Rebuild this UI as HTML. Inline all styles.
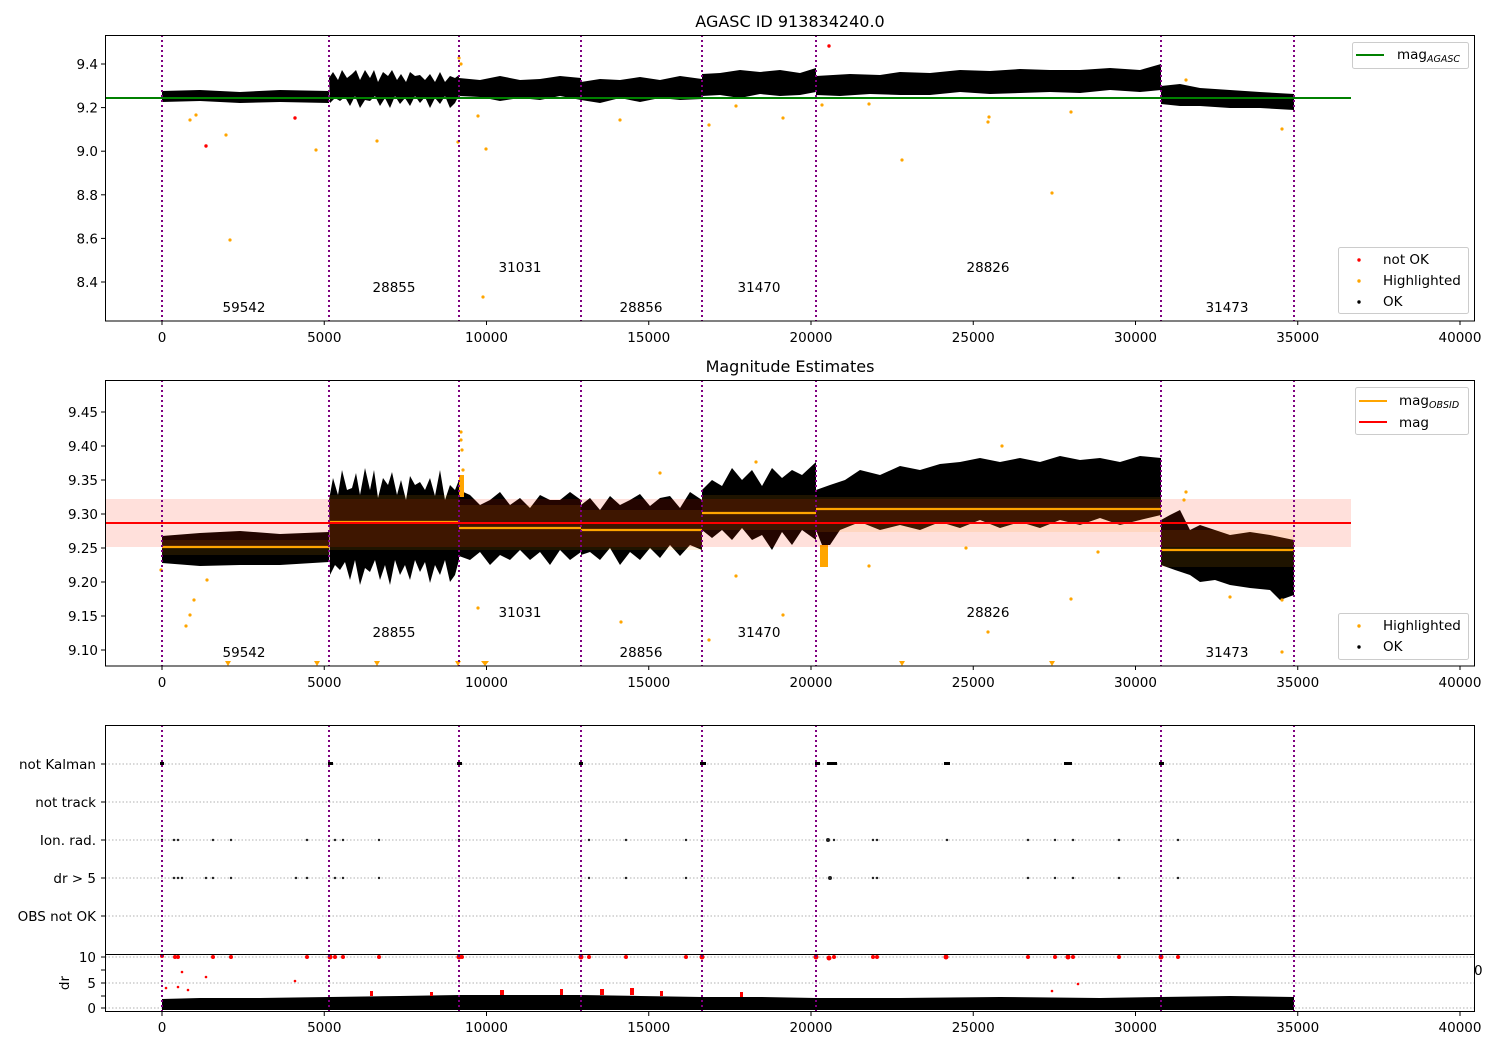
<!DOCTYPE html>
<html><head><meta charset="utf-8"><style>
html,body{margin:0;padding:0;background:#fff}
svg{display:block}
text{font-family:"DejaVu Sans","Liberation Sans",sans-serif;font-size:13.5px;fill:#000}
</style></head><body>
<svg width="1500" height="1050" viewBox="0 0 1500 1050" xmlns="http://www.w3.org/2000/svg">

<!-- ================= PLOT 1 ================= -->
<text x="790" y="27" text-anchor="middle" style="font-size:16px">AGASC ID 913834240.0</text>
<g>
<g fill="#000">
<polygon points="162,91 200,90 240,92 280,90 329,91 329,103 280,102 240,103 200,101 162,102"/>
<polygon points="329,78 333,72 338,80 342,70 347,78 352,74 356,70 360,80 365,70 370,78 374,70 378,82 383,72 388,76 392,70 397,80 401,74 406,82 410,72 415,76 420,75 425,80 430,74 435,82 440,72 445,82 450,76 455,78 459,75 459,95 455,103 450,108 445,96 440,104 435,98 430,108 425,97 420,103 415,96 410,106 405,98 400,104 395,96 390,108 385,98 380,106 375,96 370,101 365,100 360,108 355,96 350,106 345,97 340,101 335,98 330,103"/>
<polygon points="459,78 480,80 500,76 520,80 540,79 560,76 581,78 581,100 560,96 540,100 520,98 500,101 480,97 459,96"/>
<polygon points="581,82 600,79 620,80 640,77 660,80 680,76 702,79 702,99 680,100 660,98 640,102 620,98 600,103 581,100"/>
<polygon points="702,74 720,73 740,70 760,72 780,70 800,73 816,68 816,92 800,95 780,96 760,94 740,98 720,95 702,96"/>
<polygon points="816,76 850,74 880,75 900,72 930,73 960,70 990,71 1020,69 1050,70 1080,70 1110,68 1140,70 1161,64 1161,90 1140,92 1110,90 1080,93 1050,92 1020,93 990,94 960,92 930,95 900,95 870,94 840,96 816,95"/>
<polygon points="1161,86 1180,84 1200,88 1230,90 1260,92 1294,94 1294,110 1260,108 1230,108 1200,106 1180,106 1161,104"/>
</g>
<line x1="105" x2="1351" y1="98" y2="98" stroke="#008000" stroke-width="2"/>
<g fill="#ffa500">
<circle cx="230" cy="240" r="1.6"/><circle cx="226" cy="135" r="1.6"/><circle cx="196" cy="115" r="1.6"/><circle cx="190" cy="120" r="1.6"/><circle cx="316" cy="150" r="1.6"/><circle cx="377" cy="141" r="1.6"/><circle cx="459" cy="58" r="1.6"/><circle cx="461" cy="64" r="1.6"/><circle cx="478" cy="116" r="1.6"/><circle cx="486" cy="149" r="1.6"/><circle cx="483" cy="297" r="1.6"/><circle cx="458" cy="142" r="1.6"/><circle cx="620" cy="120" r="1.6"/><circle cx="709" cy="125" r="1.6"/><circle cx="736" cy="106" r="1.6"/><circle cx="783" cy="118" r="1.6"/><circle cx="822" cy="105" r="1.6"/><circle cx="869" cy="104" r="1.6"/><circle cx="902" cy="160" r="1.6"/><circle cx="989" cy="117" r="1.6"/><circle cx="988" cy="122" r="1.6"/><circle cx="1052" cy="193" r="1.6"/><circle cx="1071" cy="112" r="1.6"/><circle cx="1282" cy="129" r="1.6"/><circle cx="1186" cy="80" r="1.6"/>
</g>
<g fill="#f00"><circle cx="206" cy="146" r="1.7"/><circle cx="295" cy="118" r="1.7"/><circle cx="829" cy="46" r="1.7"/></g>
<g stroke="#800080" stroke-width="2" stroke-dasharray="2,3">
<line x1="162" x2="162" y1="35" y2="321"/><line x1="329" x2="329" y1="35" y2="321"/><line x1="459" x2="459" y1="35" y2="321"/><line x1="581" x2="581" y1="35" y2="321"/><line x1="702" x2="702" y1="35" y2="321"/><line x1="816" x2="816" y1="35" y2="321"/><line x1="1161" x2="1161" y1="35" y2="321"/><line x1="1294" x2="1294" y1="35" y2="321"/>
</g>
<rect x="105.5" y="35.5" width="1369" height="285.5" fill="none" stroke="#000" stroke-width="1"/>
<g stroke="#000"><line x1="101" x2="105" y1="64" y2="64"/><line x1="101" x2="105" y1="107.6" y2="107.6"/><line x1="101" x2="105" y1="151.2" y2="151.2"/><line x1="101" x2="105" y1="194.8" y2="194.8"/><line x1="101" x2="105" y1="238.4" y2="238.4"/><line x1="101" x2="105" y1="282" y2="282"/></g>
<g text-anchor="end"><text x="98" y="69">9.4</text><text x="98" y="112.6">9.2</text><text x="98" y="156.2">9.0</text><text x="98" y="199.8">8.8</text><text x="98" y="243.4">8.6</text><text x="98" y="287">8.4</text></g>
<g stroke="#000"><line x1="162" x2="162" y1="321" y2="325"/><line x1="324.25" x2="324.25" y1="321" y2="325"/><line x1="486.5" x2="486.5" y1="321" y2="325"/><line x1="648.75" x2="648.75" y1="321" y2="325"/><line x1="811" x2="811" y1="321" y2="325"/><line x1="973.25" x2="973.25" y1="321" y2="325"/><line x1="1135.5" x2="1135.5" y1="321" y2="325"/><line x1="1297.75" x2="1297.75" y1="321" y2="325"/><line x1="1460" x2="1460" y1="321" y2="325"/></g>
<g text-anchor="middle"><text x="162" y="342">0</text><text x="324.25" y="342">5000</text><text x="486.5" y="342">10000</text><text x="648.75" y="342">15000</text><text x="811" y="342">20000</text><text x="973.25" y="342">25000</text><text x="1135.5" y="342">30000</text><text x="1297.75" y="342">35000</text><text x="1460" y="342">40000</text></g>
<g text-anchor="middle"><text x="244" y="312">59542</text><text x="394" y="292">28855</text><text x="520" y="272">31031</text><text x="641" y="312">28856</text><text x="759" y="292">31470</text><text x="988" y="272">28826</text><text x="1227" y="312">31473</text></g>
<rect x="1352.5" y="42.5" width="116" height="26" rx="2" fill="#fff" fill-opacity="0.8" stroke="#ccc"/>
<line x1="1356" x2="1384" y1="55" y2="55" stroke="#008000" stroke-width="2"/>
<text x="1397" y="59">mag<tspan style="font-size:9.5px;font-style:italic" dy="3">AGASC</tspan></text>
<rect x="1338.5" y="247.5" width="130" height="66" rx="2" fill="#fff" fill-opacity="0.8" stroke="#ccc"/>
<circle cx="1359" cy="260" r="1.7" fill="#f00"/><text x="1383" y="264">not OK</text>
<circle cx="1359" cy="281" r="1.7" fill="#ffa500"/><text x="1383" y="285">Highlighted</text>
<circle cx="1359" cy="302" r="1.7" fill="#000"/><text x="1383" y="306">OK</text>
</g>

<!-- ================= PLOT 2 ================= -->
<text x="790" y="372" text-anchor="middle" style="font-size:16px">Magnitude Estimates</text>
<g fill="#000">
<polygon points="162,536 200,533 240,531 280,534 329,532 329,562 280,565 240,565 200,566 162,563"/>
<polygon points="329,500 333,478 338,495 342,470 347,490 352,488 356,473 360,495 365,468 370,490 374,470 378,498 383,478 388,485 392,472 397,495 401,480 406,500 410,476 415,485 420,482 425,490 430,478 435,496 440,470 445,500 450,485 455,490 459,480 459,560 455,575 450,582 445,560 440,575 435,565 430,583 425,562 420,572 415,560 410,580 405,565 400,575 395,560 390,585 385,565 380,580 375,560 370,572 365,568 360,585 355,560 350,580 345,562 340,570 335,565 330,575"/>
<polygon points="459,490 470,495 480,505 490,500 500,492 510,505 520,498 530,508 540,495 550,500 560,500 570,492 581,500 581,552 570,560 560,550 550,565 540,552 530,560 520,550 510,560 500,555 490,565 480,552 470,560 459,556"/>
<polygon points="581,505 590,498 600,510 610,496 620,505 630,500 640,494 650,506 660,498 670,496 680,508 690,492 702,500 702,550 690,545 680,556 670,545 660,558 650,548 640,560 630,552 620,565 610,548 600,560 590,552 581,555"/>
<polygon points="702,490 712,480 722,486 732,468 742,480 752,470 762,486 772,468 782,478 792,470 802,475 816,462 816,540 802,530 792,545 782,532 772,550 762,535 752,540 742,528 732,540 722,530 712,538 702,530"/>
<polygon points="816,490 830,485 845,480 860,470 880,475 900,466 920,470 940,464 960,462 980,458 1000,462 1020,458 1040,462 1060,456 1080,460 1100,458 1120,462 1140,456 1161,458 1161,515 1140,520 1120,525 1100,518 1080,525 1060,520 1040,528 1020,522 1000,528 980,520 960,528 940,522 920,530 900,525 880,530 860,522 840,530 830,545 822,545 816,530"/>
<polygon points="1161,520 1170,515 1180,510 1190,530 1200,525 1215,530 1230,535 1250,532 1270,535 1294,540 1294,595 1280,600 1270,590 1250,588 1230,585 1215,580 1200,582 1190,575 1175,570 1161,565"/>
</g>
<g fill="#ffa500">
<rect x="820" y="545" width="8" height="22"/>
<rect x="459" y="475" width="5" height="22"/>
</g>
<g fill="#ffa500" fill-opacity="0.12">
<rect x="162" y="540" width="167" height="15"/><rect x="329" y="495" width="130" height="55"/><rect x="459" y="505" width="122" height="45"/><rect x="581" y="510" width="121" height="40"/><rect x="702" y="495" width="114" height="35"/><rect x="816" y="497" width="345" height="35"/><rect x="1161" y="530" width="133" height="37"/>
</g>
<rect x="105" y="499" width="1246" height="48" fill="#ff2000" fill-opacity="0.14"/>
<g stroke="#ffa500" stroke-width="2.2">
<line x1="162" x2="329" y1="547" y2="547"/><line x1="329" x2="459" y1="522" y2="522"/><line x1="459" x2="581" y1="528" y2="528"/><line x1="581" x2="702" y1="530" y2="530"/><line x1="702" x2="816" y1="513" y2="513"/><line x1="816" x2="1161" y1="509" y2="509"/><line x1="1161" x2="1294" y1="550" y2="550"/>
</g>
<line x1="105" x2="1351" y1="523" y2="523" stroke="#f00" stroke-width="2"/>
<g fill="#ffa500">
<circle cx="190" cy="615" r="1.6"/><circle cx="186" cy="626" r="1.6"/><circle cx="194" cy="600" r="1.6"/><circle cx="207" cy="580" r="1.6"/><circle cx="161" cy="570" r="1.6"/><circle cx="461" cy="432" r="1.6"/><circle cx="461" cy="440" r="1.6"/><circle cx="462" cy="450" r="1.6"/><circle cx="463" cy="470" r="1.6"/><circle cx="478" cy="608" r="1.6"/><circle cx="621" cy="622" r="1.6"/><circle cx="660" cy="473" r="1.6"/><circle cx="709" cy="640" r="1.6"/><circle cx="736" cy="576" r="1.6"/><circle cx="756" cy="462" r="1.6"/><circle cx="783" cy="615" r="1.6"/><circle cx="869" cy="566" r="1.6"/><circle cx="966" cy="548" r="1.6"/><circle cx="1002" cy="446" r="1.6"/><circle cx="988" cy="632" r="1.6"/><circle cx="1071" cy="599" r="1.6"/><circle cx="1098" cy="552" r="1.6"/><circle cx="1186" cy="492" r="1.6"/><circle cx="1184" cy="500" r="1.6"/><circle cx="1230" cy="597" r="1.6"/><circle cx="1282" cy="652" r="1.6"/><circle cx="1282" cy="600" r="1.6"/>
</g>
<g fill="#ffa500">
<polygon points="225,661 231,661 228,666"/><polygon points="314,661 320,661 317,666"/><polygon points="374,661 380,661 377,666"/><polygon points="455,661 461,661 458,666"/><polygon points="481,661 489,661 485,666"/><polygon points="899,661 905,661 902,666"/><polygon points="1049,661 1055,661 1052,666"/>
</g>
<g stroke="#800080" stroke-width="2" stroke-dasharray="2,3">
<line x1="162" x2="162" y1="380" y2="666"/><line x1="329" x2="329" y1="380" y2="666"/><line x1="459" x2="459" y1="380" y2="666"/><line x1="581" x2="581" y1="380" y2="666"/><line x1="702" x2="702" y1="380" y2="666"/><line x1="816" x2="816" y1="380" y2="666"/><line x1="1161" x2="1161" y1="380" y2="666"/><line x1="1294" x2="1294" y1="380" y2="666"/>
</g>
<rect x="105.5" y="380.5" width="1369" height="285.5" fill="none" stroke="#000"/>
<g stroke="#000"><line x1="101" x2="105" y1="412" y2="412"/><line x1="101" x2="105" y1="446" y2="446"/><line x1="101" x2="105" y1="480" y2="480"/><line x1="101" x2="105" y1="514" y2="514"/><line x1="101" x2="105" y1="548" y2="548"/><line x1="101" x2="105" y1="582" y2="582"/><line x1="101" x2="105" y1="616" y2="616"/><line x1="101" x2="105" y1="650" y2="650"/></g>
<g text-anchor="end"><text x="98" y="417">9.45</text><text x="98" y="451">9.40</text><text x="98" y="485">9.35</text><text x="98" y="519">9.30</text><text x="98" y="553">9.25</text><text x="98" y="587">9.20</text><text x="98" y="621">9.15</text><text x="98" y="655">9.10</text></g>
<g stroke="#000"><line x1="162" x2="162" y1="666" y2="670"/><line x1="324.25" x2="324.25" y1="666" y2="670"/><line x1="486.5" x2="486.5" y1="666" y2="670"/><line x1="648.75" x2="648.75" y1="666" y2="670"/><line x1="811" x2="811" y1="666" y2="670"/><line x1="973.25" x2="973.25" y1="666" y2="670"/><line x1="1135.5" x2="1135.5" y1="666" y2="670"/><line x1="1297.75" x2="1297.75" y1="666" y2="670"/><line x1="1460" x2="1460" y1="666" y2="670"/></g>
<g text-anchor="middle"><text x="162" y="687">0</text><text x="324.25" y="687">5000</text><text x="486.5" y="687">10000</text><text x="648.75" y="687">15000</text><text x="811" y="687">20000</text><text x="973.25" y="687">25000</text><text x="1135.5" y="687">30000</text><text x="1297.75" y="687">35000</text><text x="1460" y="687">40000</text></g>
<g text-anchor="middle"><text x="244" y="657">59542</text><text x="394" y="637">28855</text><text x="520" y="617">31031</text><text x="641" y="657">28856</text><text x="759" y="637">31470</text><text x="988" y="617">28826</text><text x="1227" y="657">31473</text></g>
<rect x="1355.5" y="387.5" width="113" height="47" rx="2" fill="#fff" fill-opacity="0.8" stroke="#ccc"/>
<line x1="1359" x2="1387" y1="401" y2="401" stroke="#ffa500" stroke-width="2"/>
<text x="1399" y="405">mag<tspan style="font-size:9.5px;font-style:italic" dy="3">OBSID</tspan></text>
<line x1="1359" x2="1387" y1="422" y2="422" stroke="#f00" stroke-width="2"/>
<text x="1399" y="427">mag</text>
<rect x="1338.5" y="613.5" width="130" height="46" rx="2" fill="#fff" fill-opacity="0.8" stroke="#ccc"/>
<circle cx="1359" cy="626" r="1.7" fill="#ffa500"/><text x="1383" y="630">Highlighted</text>
<circle cx="1359" cy="647" r="1.7" fill="#000"/><text x="1383" y="651">OK</text>

<!-- ================= PLOT 3 ================= -->
<g stroke="#b0b0b0" stroke-width="0.9" stroke-dasharray="1.5,2">
<line x1="105" x2="1475" y1="764" y2="764"/><line x1="105" x2="1475" y1="802" y2="802"/><line x1="105" x2="1475" y1="840" y2="840"/><line x1="105" x2="1475" y1="878" y2="878"/><line x1="105" x2="1475" y1="916" y2="916"/>
<line x1="105" x2="1475" y1="957" y2="957"/><line x1="105" x2="1475" y1="983" y2="983"/><line x1="105" x2="1475" y1="1008" y2="1008"/>
</g>
<g fill="#000">
<rect x="160" y="762" width="4" height="3"/><rect x="328" y="762" width="5" height="3"/><rect x="457" y="762" width="5" height="3"/><rect x="579" y="762" width="4" height="3"/><rect x="700" y="762" width="6" height="3"/><rect x="815" y="762" width="5" height="3"/><rect x="827" y="762" width="10" height="3"/><rect x="944" y="762" width="6" height="3"/><rect x="1064" y="762" width="8" height="3"/><rect x="1159" y="762" width="5" height="3"/>
</g>
<g fill="#222">
<circle cx="162" cy="840" r="1.2"/><circle cx="174" cy="840" r="1.2"/><circle cx="178" cy="840" r="1.2"/><circle cx="213" cy="840" r="1.2"/><circle cx="231" cy="840" r="1.2"/><circle cx="307" cy="840" r="1.2"/><circle cx="335" cy="840" r="1.2"/><circle cx="343" cy="840" r="1.2"/><circle cx="379" cy="840" r="1.2"/><circle cx="459" cy="840" r="1.2"/><circle cx="589" cy="840" r="1.2"/><circle cx="626" cy="840" r="1.2"/><circle cx="686" cy="840" r="1.2"/><circle cx="828" cy="840" r="2"/><circle cx="834" cy="840" r="1.2"/><circle cx="873" cy="840" r="1.2"/><circle cx="877" cy="840" r="1.2"/><circle cx="947" cy="840" r="1.2"/><circle cx="1028" cy="840" r="1.2"/><circle cx="1055" cy="840" r="1.2"/><circle cx="1073" cy="840" r="1.2"/><circle cx="1119" cy="840" r="1.2"/><circle cx="1178" cy="840" r="1.2"/>
<circle cx="174" cy="878" r="1.2"/><circle cx="178" cy="878" r="1.2"/><circle cx="182" cy="878" r="1.2"/><circle cx="206" cy="878" r="1.2"/><circle cx="213" cy="878" r="1.2"/><circle cx="231" cy="878" r="1.2"/><circle cx="296" cy="878" r="1.2"/><circle cx="307" cy="878" r="1.2"/><circle cx="335" cy="878" r="1.2"/><circle cx="343" cy="878" r="1.2"/><circle cx="379" cy="878" r="1.2"/><circle cx="589" cy="878" r="1.2"/><circle cx="626" cy="878" r="1.2"/><circle cx="686" cy="878" r="1.2"/><circle cx="830" cy="878" r="2"/><circle cx="873" cy="878" r="1.2"/><circle cx="877" cy="878" r="1.2"/><circle cx="1028" cy="878" r="1.2"/><circle cx="1055" cy="878" r="1.2"/><circle cx="1073" cy="878" r="1.2"/><circle cx="1119" cy="878" r="1.2"/><circle cx="1178" cy="878" r="1.2"/>
</g>
<polygon points="162,999 200,998 260,998 329,997 400,996 459,995 520,995 581,995 640,996 702,997 760,997 816,998 900,998 1000,997 1100,998 1161,997 1230,996 1294,997 1294,1010 162,1010" fill="#000"/>
<g fill="#f00">
<circle cx="162" cy="956" r="2"/><circle cx="175" cy="957" r="2"/><circle cx="178" cy="957" r="2"/><circle cx="213" cy="957" r="2"/><circle cx="231" cy="957" r="2"/><circle cx="307" cy="957" r="2"/><circle cx="330" cy="957" r="2.5"/><circle cx="335" cy="957" r="2"/><circle cx="343" cy="957" r="2"/><circle cx="379" cy="957" r="2"/><circle cx="459" cy="957" r="2.5"/><circle cx="462" cy="957" r="2"/><circle cx="581" cy="957" r="2.5"/><circle cx="589" cy="957" r="2"/><circle cx="626" cy="957" r="2"/><circle cx="686" cy="957" r="2"/><circle cx="702" cy="957" r="2.5"/><circle cx="816" cy="957" r="2.5"/><circle cx="829" cy="958" r="2.5"/><circle cx="834" cy="957" r="2"/><circle cx="873" cy="957" r="2"/><circle cx="877" cy="957" r="2"/><circle cx="946" cy="957" r="2.5"/><circle cx="1028" cy="957" r="2"/><circle cx="1055" cy="957" r="2"/><circle cx="1068" cy="957" r="2.5"/><circle cx="1073" cy="957" r="2"/><circle cx="1119" cy="957" r="2"/><circle cx="1161" cy="957" r="2.5"/><circle cx="1178" cy="957" r="2"/>
<circle cx="182" cy="972" r="1.3"/><circle cx="166" cy="988" r="1.3"/><circle cx="178" cy="987" r="1.3"/><circle cx="188" cy="990" r="1.3"/><circle cx="206" cy="977" r="1.3"/><circle cx="295" cy="981" r="1.3"/><circle cx="1078" cy="984" r="1.3"/><circle cx="1052" cy="991" r="1.3"/>
<rect x="370" y="991" width="3" height="5"/><rect x="430" y="992" width="3" height="4"/><rect x="500" y="990" width="4" height="5"/><rect x="560" y="989" width="3" height="6"/><rect x="600" y="989" width="4" height="6"/><rect x="630" y="988" width="4" height="7"/><rect x="660" y="991" width="3" height="5"/><rect x="740" y="992" width="3" height="5"/>
</g>
<g stroke="#800080" stroke-width="2" stroke-dasharray="2,3">
<line x1="162" x2="162" y1="725" y2="1012"/><line x1="329" x2="329" y1="725" y2="1012"/><line x1="459" x2="459" y1="725" y2="1012"/><line x1="581" x2="581" y1="725" y2="1012"/><line x1="702" x2="702" y1="725" y2="1012"/><line x1="816" x2="816" y1="725" y2="1012"/><line x1="1161" x2="1161" y1="725" y2="1012"/><line x1="1294" x2="1294" y1="725" y2="1012"/>
</g>
<rect x="105.5" y="725.5" width="1369" height="286" fill="none" stroke="#000"/>
<line x1="105" x2="1475" y1="954.5" y2="954.5" stroke="#000"/>
<g stroke="#000"><line x1="101" x2="105" y1="764" y2="764"/><line x1="101" x2="105" y1="802" y2="802"/><line x1="101" x2="105" y1="840" y2="840"/><line x1="101" x2="105" y1="878" y2="878"/><line x1="101" x2="105" y1="916" y2="916"/><line x1="101" x2="105" y1="957" y2="957"/><line x1="101" x2="105" y1="970" y2="970"/><line x1="101" x2="105" y1="983" y2="983"/><line x1="101" x2="105" y1="996" y2="996"/><line x1="101" x2="105" y1="1008" y2="1008"/></g>
<g text-anchor="end"><text x="96" y="769">not Kalman</text><text x="96" y="807">not track</text><text x="96" y="845">Ion. rad.</text><text x="96" y="883">dr &gt; 5</text><text x="96" y="921">OBS not OK</text><text x="96" y="962">10</text><text x="96" y="988">5</text><text x="96" y="1013">0</text></g>
<text transform="translate(69,983) rotate(-90)" text-anchor="middle">dr</text>
<text x="1474" y="975">0</text>
<g stroke="#000"><line x1="162" x2="162" y1="1012" y2="1016"/><line x1="324.25" x2="324.25" y1="1012" y2="1016"/><line x1="486.5" x2="486.5" y1="1012" y2="1016"/><line x1="648.75" x2="648.75" y1="1012" y2="1016"/><line x1="811" x2="811" y1="1012" y2="1016"/><line x1="973.25" x2="973.25" y1="1012" y2="1016"/><line x1="1135.5" x2="1135.5" y1="1012" y2="1016"/><line x1="1297.75" x2="1297.75" y1="1012" y2="1016"/><line x1="1460" x2="1460" y1="1012" y2="1016"/></g>
<g text-anchor="middle"><text x="162" y="1032">0</text><text x="324.25" y="1032">5000</text><text x="486.5" y="1032">10000</text><text x="648.75" y="1032">15000</text><text x="811" y="1032">20000</text><text x="973.25" y="1032">25000</text><text x="1135.5" y="1032">30000</text><text x="1297.75" y="1032">35000</text><text x="1460" y="1032">40000</text></g>
</svg>
</body></html>
